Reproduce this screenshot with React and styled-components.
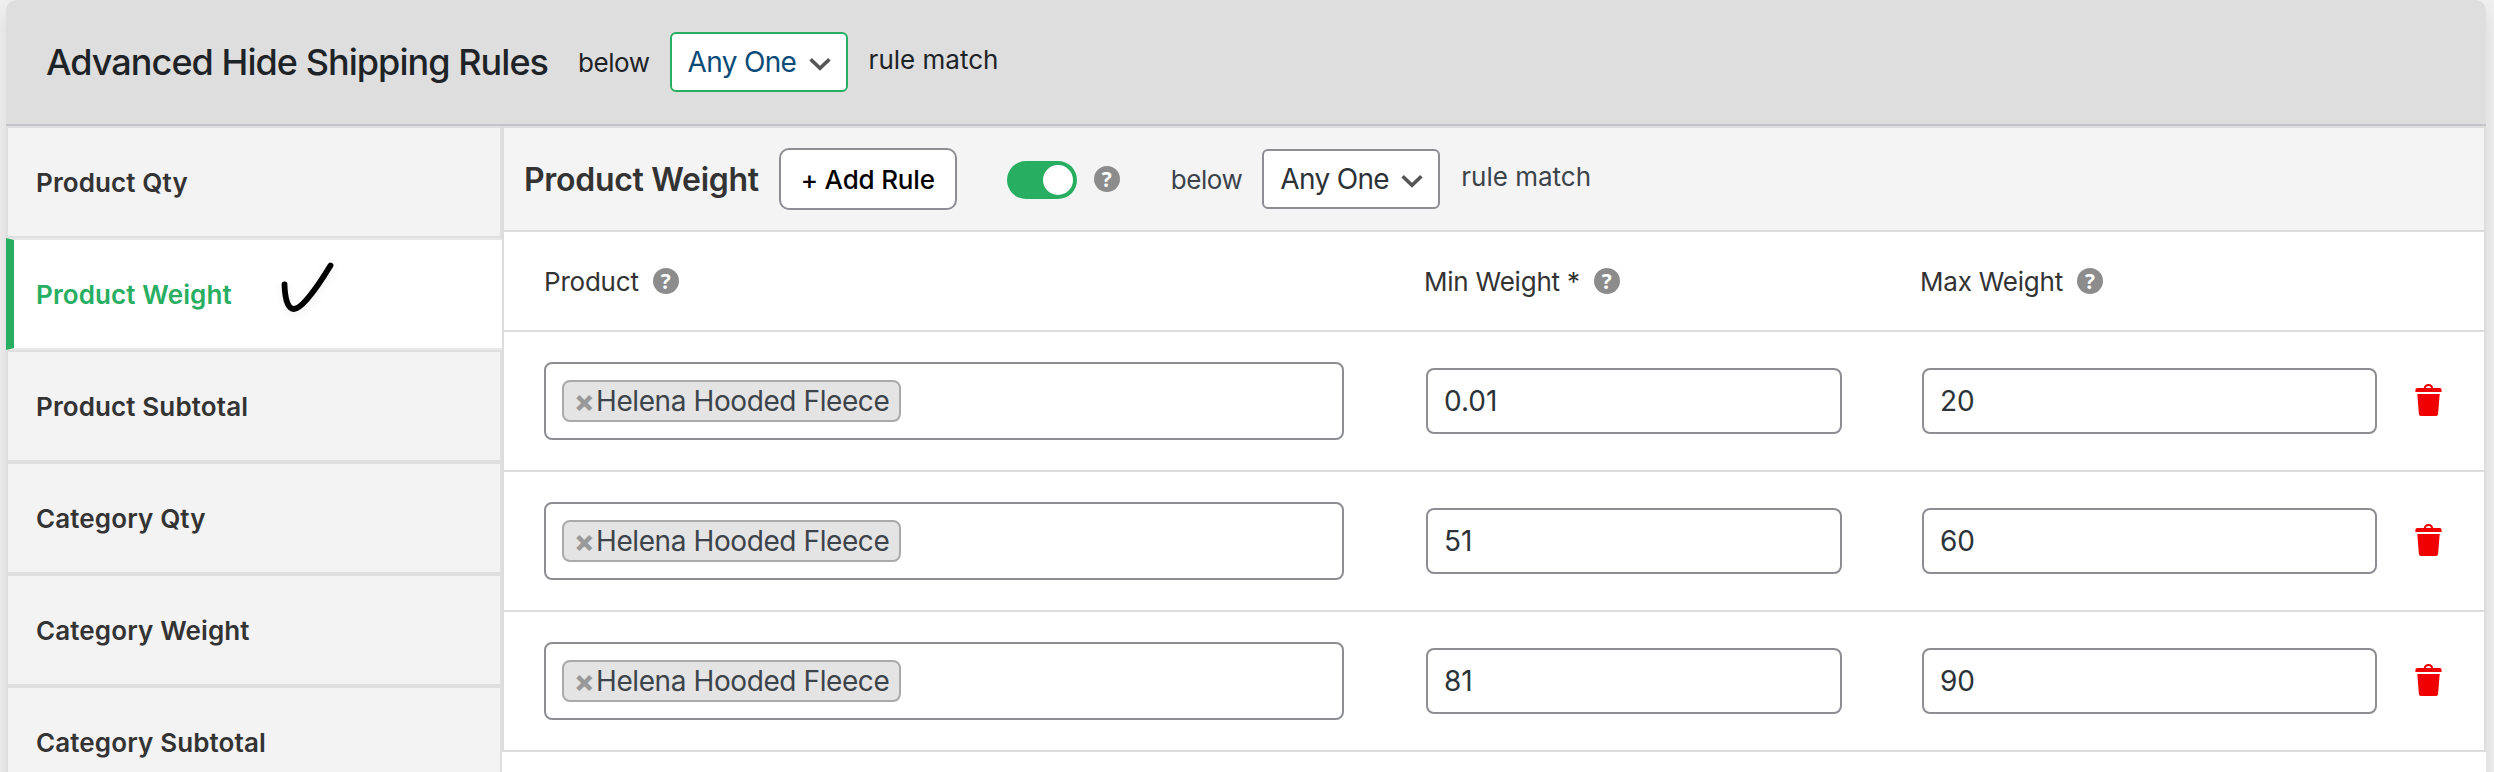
import React from "react";
import styled, {createGlobalStyle} from "styled-components";

const tabs = [
  "Product Qty",
  "Product Weight",
  "Product Subtotal",
  "Category Qty",
  "Category Weight",
  "Category Subtotal",
];

const initialRules = [
  {id: 1, product: "Helena Hooded Fleece", min: "0.01", max: "20"},
  {id: 2, product: "Helena Hooded Fleece", min: "51", max: "60"},
  {id: 3, product: "Helena Hooded Fleece", min: "81", max: "90"},
];

const MatchSelect = ({focused}) => (
  <SelectBox $focused={focused}>
    Any One
    <svg width="22" height="14" viewBox="0 0 22 14" fill="none">
      <path d="M1.6 2.2 L11 11.2 L20.4 2.2" stroke="#555" strokeWidth="3.6" />
    </svg>
  </SelectBox>
);

const Check = () => (
  <CheckSvg width="56" height="52" viewBox="0 0 56 52" fill="none">
    <path
      d="M5.5 24.5 C5.8 36 8 49 15 49 C22 49 36 31 51.5 5.5"
      stroke="#000"
      strokeWidth="5.8"
      strokeLinecap="round"
    />
  </CheckSvg>
);

const Trash = () => (
  <svg width="27" height="32" viewBox="0 0 27 32" fill="#f00000">
    <path
      d="M9.6 5 C9.9 2.3 11.4 1.1 13.5 1.1 C15.6 1.1 17.1 2.3 17.4 5"
      fill="none"
      stroke="#f00000"
      strokeWidth="2"
    />
    <path d="M0.4 8 V6 Q0.4 4 2.4 4 H24.6 Q26.6 4 26.6 6 V8 Z" />
    <path d="M2.3 10 H24.7 L23.1 30 Q22.9 32 21 32 H6 Q4.1 32 3.9 30 Z" />
  </svg>
);

const App = () => {
  const [active, setActive] = React.useState("Product Weight");
  const [enabled, setEnabled] = React.useState(true);
  const [rules, setRules] = React.useState(initialRules);

  const addRule = () => {
    setRules([
      ...rules,
      {id: Date.now(), product: "Helena Hooded Fleece", min: "", max: ""},
    ]);
  };

  const removeRule = (id) => {
    setRules(rules.filter((rule) => rule.id !== id));
  };

  const editRule = (id, key, value) => {
    setRules(rules.map((r) => (r.id === id ? {...r, [key]: value} : r)));
  };

  return (
    <Page>
      <GlobalStyle />
      <Panel>
        <PanelHead>
          <PanelTitle>Advanced Hide Shipping Rules</PanelTitle>
          <Below>below</Below>
          <MatchSelect focused />
          <RuleMatch>rule match</RuleMatch>
        </PanelHead>
        <PanelBody>
          <TabList>
            {tabs.map((tab) => (
              <Tab
                key={tab}
                $active={tab === active}
                onClick={() => setActive(tab)}
              >
                {tab}
                {tab === "Product Weight" && <Check />}
              </Tab>
            ))}
          </TabList>
          <Content>
            <Toolbar>
              <SectionTitle>Product Weight</SectionTitle>
              <AddButton onClick={addRule}>+ Add Rule</AddButton>
              <Toggle $on={enabled} onClick={() => setEnabled(!enabled)}>
                <Knob />
              </Toggle>
              <Help>?</Help>
              <ToolbarText>
                <Below>below</Below>
                <MatchSelect />
                <RuleMatch>rule match</RuleMatch>
              </ToolbarText>
            </Toolbar>
            <HeadRow>
              <HeadCell>
                Product <Help>?</Help>
              </HeadCell>
              <HeadCell>
                Min Weight * <Help>?</Help>
              </HeadCell>
              <HeadCell>
                Max Weight <Help>?</Help>
              </HeadCell>
            </HeadRow>
            {rules.map((rule) => (
              <RuleRow key={rule.id}>
                <ProductBox>
                  <Tag>
                    <TagRemove>×</TagRemove>
                    {rule.product}
                  </Tag>
                </ProductBox>
                <WeightInput
                  value={rule.min}
                  onChange={(e) => editRule(rule.id, "min", e.target.value)}
                />
                <WeightInput
                  value={rule.max}
                  onChange={(e) => editRule(rule.id, "max", e.target.value)}
                />
                <DeleteButton onClick={() => removeRule(rule.id)}>
                  <Trash />
                </DeleteButton>
              </RuleRow>
            ))}
          </Content>
        </PanelBody>
      </Panel>
    </Page>
  );
};

const GlobalStyle = createGlobalStyle`
  * {
    box-sizing: border-box;
  }
  body {
    margin: 0;
    background: #f0f0f1;
    font-family: "Inter", sans-serif;
    font-size: 26px;
    color: #333;
  }
  button, input {
    font-family: inherit;
  }
`;

const Page = styled.div`
  height: 772px;
  padding: 0 8px 0 6px;
  overflow: hidden;
`;

const Panel = styled.div`
  height: 900px;
  background: #fff;
  border-radius: 10px 10px 0 0;
  box-shadow: 0 10px 20px rgba(0, 0, 0, 0.1);
`;

const PanelHead = styled.div`
  display: flex;
  align-items: center;
  height: 126px;
  padding-left: 40px;
  background: #dedede;
  border-bottom: 2px solid #c3c3c9;
  border-radius: 10px 10px 0 0;
  color: #1d2327;
`;

const PanelTitle = styled.h2`
  margin: 0 30px 0 0;
  font-size: 36px;
  font-weight: 500;
  letter-spacing: -0.95px;
  white-space: nowrap;
`;

const Below = styled.span`
  margin-right: 20px;
  letter-spacing: -0.45px;
`;

const RuleMatch = styled.span`
  margin-left: 21px;
  padding-bottom: 6px;
`;

const SelectBox = styled.div`
  display: flex;
  align-items: center;
  justify-content: space-between;
  width: 178px;
  height: 60px;
  padding: 0 15px 0 16px;
  border: 2px solid ${(props) => (props.$focused ? "#27ae60" : "#8d8e94")};
  border-radius: 6px;
  background: #fff;
  color: ${(props) => (props.$focused ? "#0a4b78" : "#2c3338")};
  font-size: 28px;
  letter-spacing: -0.67px;
  white-space: nowrap;

  svg {
    margin-top: 3px;
  }
`;

const PanelBody = styled.div`
  display: flex;
  align-items: flex-start;
`;

const TabList = styled.div`
  flex: none;
  width: 496px;
`;

const Tab = styled.div`
  display: flex;
  align-items: center;
  height: 112px;
  padding-left: ${(props) => (props.$active ? "22px" : "28px")};
  border: 2px solid ${(props) => (props.$active ? "#e8e8e8" : "#dfdfdf")};
  ${(props) =>
    props.$active && "border-left: 8px solid #27ae60; border-right: none;"}
  background: ${(props) => (props.$active ? "#fff" : "#f3f3f3")};
  color: ${(props) => (props.$active ? "#27ae60" : "#333")};
  font-weight: 600;
  letter-spacing: 0.12px;
  cursor: pointer;
`;

const CheckSvg = styled.svg`
  margin: -16px 0 0 47px;
  filter: drop-shadow(0 3px 4px rgba(0, 0, 0, 0.06));
`;

const Content = styled.div`
  flex: 1;
  border: 2px solid #dcdcdc;
  border-bottom: none;
`;

const Toolbar = styled.div`
  display: flex;
  align-items: center;
  height: 104px;
  padding-left: 20px;
  background: #f4f4f4;
  border-bottom: 2px solid #dcdcdc;
`;

const SectionTitle = styled.h3`
  margin: 0 20px 0 0;
  font-size: 32px;
  font-weight: 600;
  letter-spacing: -0.3px;
`;

const AddButton = styled.button`
  width: 178px;
  height: 62px;
  padding: 0;
  border: 2px solid #8d8e94;
  border-radius: 10px;
  background: #fff;
  color: #000;
  font-size: 26px;
  font-weight: 500;
  letter-spacing: -0.17px;
`;

const Toggle = styled.div`
  display: flex;
  align-items: center;
  justify-content: ${(props) => (props.$on ? "flex-end" : "flex-start")};
  width: 70px;
  height: 38px;
  margin: 2px 17px 0 50px;
  padding: 4px;
  border-radius: 19px;
  background: ${(props) => (props.$on ? "#27ae60" : "#ccc")};
`;

const Knob = styled.span`
  width: 30px;
  height: 30px;
  border-radius: 50%;
  background: #fff;
`;

const Help = styled.span`
  display: inline-flex;
  align-items: center;
  justify-content: center;
  width: 26px;
  height: 26px;
  border-radius: 50%;
  background: #8c8c8c;
  color: #fff;
  font: 700 21px/26px "Open Sans", sans-serif;
`;

const ToolbarText = styled.div`
  display: flex;
  align-items: center;
  margin-left: 51px;
  color: #3c434a;
`;

const HeadRow = styled.div`
  display: grid;
  grid-template-columns: 880px 496px 1fr;
  align-items: center;
  height: 100px;
  padding-left: 40px;
  border-bottom: 2px solid #dcdcdc;
`;

const HeadCell = styled.div`
  display: flex;
  align-items: center;
  gap: 14px;
  letter-spacing: -0.22px;
`;

const RuleRow = styled.div`
  display: grid;
  grid-template-columns: 802px 416px 455px 27px;
  column-gap: 80px;
  align-items: center;
  height: 140px;
  padding-left: 40px;
  border-bottom: 2px solid #dcdcdc;
`;

const ProductBox = styled.div`
  display: flex;
  align-items: center;
  width: 800px;
  height: 78px;
  padding-left: 16px;
  border: 2px solid #8d8e94;
  border-radius: 8px;
`;

const Tag = styled.span`
  display: flex;
  align-items: center;
  width: 339px;
  height: 42px;
  padding-left: 10px;
  border: 2px solid #aaa;
  border-radius: 8px;
  background: #e4e4e4;
  color: #3c434a;
  font-size: 28px;
  letter-spacing: -0.41px;
  white-space: nowrap;
`;

const TagRemove = styled.span`
  width: 22px;
  color: #999;
  font-size: 30px;
  font-weight: 800;
  line-height: 30px;
  cursor: pointer;
`;

const WeightInput = styled.input`
  width: 100%;
  height: 66px;
  padding: 0 16px;
  border: 2px solid #8d8e94;
  border-radius: 8px;
  background: #fff;
  color: #2c3338;
  font-size: 28px;
`;

const DeleteButton = styled.button`
  display: flex;
  width: 27px;
  margin: -2px 0 0 -42px;
  padding: 0;
  border: none;
  background: none;
  cursor: pointer;
`;

export default App;
